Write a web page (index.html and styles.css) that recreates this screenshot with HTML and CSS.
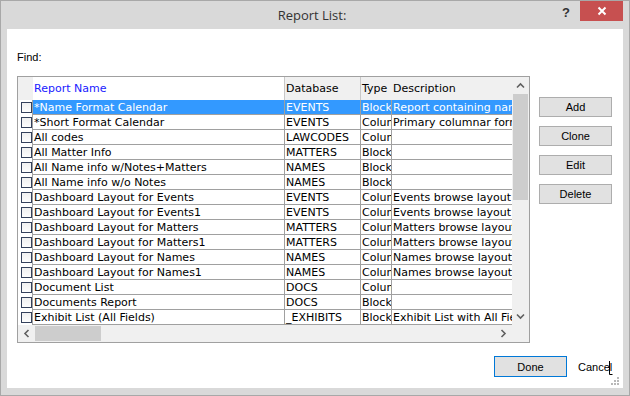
FILE: index.html
```html
<!DOCTYPE html>
<html>
<head>
	<meta charset="utf-8">
	<title>Report List</title>
	<link rel="stylesheet" href="styles.css">
</head>
<body>

<div class="window">
	<div class="titlebar">
		<div></div>
		<div class="title">Report List:</div>
		<div class="controls">
			<span class="help">?</span>
			<span class="close">
				<svg width="10" height="10" viewBox="0 0 10 10"><path d="M1.5 1.5 L8.5 8.5 M8.5 1.5 L1.5 8.5" stroke="#fff" stroke-width="2" fill="none"/></svg>
			</span>
		</div>
	</div>

	<div class="client">
		<div class="find">Find:</div>

		<div class="main">
			<div class="list">
				<div class="view">
					<div class="row head">
						<div class="cell chk"></div>
						<div class="cell sorted">Report Name</div>
						<div class="cell">Database</div>
						<div class="cell type">Type</div>
						<div class="cell">Description</div>
					</div>
					<div class="row sel">
						<div class="cell chk"><span class="box"></span></div>
						<div class="cell">*Name Format Calendar</div>
						<div class="cell">EVENTS</div>
						<div class="cell">Block</div>
						<div class="cell">Report containing names</div>
					</div>
					<div class="row">
						<div class="cell chk"><span class="box"></span></div>
						<div class="cell">*Short Format Calendar</div>
						<div class="cell">EVENTS</div>
						<div class="cell">Column</div>
						<div class="cell">Primary columnar format</div>
					</div>
					<div class="row">
						<div class="cell chk"><span class="box"></span></div>
						<div class="cell">All codes</div>
						<div class="cell">LAWCODES</div>
						<div class="cell">Column</div>
						<div class="cell"></div>
					</div>
					<div class="row">
						<div class="cell chk"><span class="box"></span></div>
						<div class="cell">All Matter Info</div>
						<div class="cell">MATTERS</div>
						<div class="cell">Block</div>
						<div class="cell"></div>
					</div>
					<div class="row">
						<div class="cell chk"><span class="box"></span></div>
						<div class="cell">All Name info w/Notes+Matters</div>
						<div class="cell">NAMES</div>
						<div class="cell">Block</div>
						<div class="cell"></div>
					</div>
					<div class="row">
						<div class="cell chk"><span class="box"></span></div>
						<div class="cell">All Name info w/o Notes</div>
						<div class="cell">NAMES</div>
						<div class="cell">Block</div>
						<div class="cell"></div>
					</div>
					<div class="row">
						<div class="cell chk"><span class="box"></span></div>
						<div class="cell">Dashboard Layout for Events</div>
						<div class="cell">EVENTS</div>
						<div class="cell">Column</div>
						<div class="cell">Events browse layout</div>
					</div>
					<div class="row">
						<div class="cell chk"><span class="box"></span></div>
						<div class="cell">Dashboard Layout for Events1</div>
						<div class="cell">EVENTS</div>
						<div class="cell">Column</div>
						<div class="cell">Events browse layout</div>
					</div>
					<div class="row">
						<div class="cell chk"><span class="box"></span></div>
						<div class="cell">Dashboard Layout for Matters</div>
						<div class="cell">MATTERS</div>
						<div class="cell">Column</div>
						<div class="cell">Matters browse layout</div>
					</div>
					<div class="row">
						<div class="cell chk"><span class="box"></span></div>
						<div class="cell">Dashboard Layout for Matters1</div>
						<div class="cell">MATTERS</div>
						<div class="cell">Column</div>
						<div class="cell">Matters browse layout</div>
					</div>
					<div class="row">
						<div class="cell chk"><span class="box"></span></div>
						<div class="cell">Dashboard Layout for Names</div>
						<div class="cell">NAMES</div>
						<div class="cell">Column</div>
						<div class="cell">Names browse layout</div>
					</div>
					<div class="row">
						<div class="cell chk"><span class="box"></span></div>
						<div class="cell">Dashboard Layout for Names1</div>
						<div class="cell">NAMES</div>
						<div class="cell">Column</div>
						<div class="cell">Names browse layout</div>
					</div>
					<div class="row">
						<div class="cell chk"><span class="box"></span></div>
						<div class="cell">Document List</div>
						<div class="cell">DOCS</div>
						<div class="cell">Column</div>
						<div class="cell"></div>
					</div>
					<div class="row">
						<div class="cell chk"><span class="box"></span></div>
						<div class="cell">Documents Report</div>
						<div class="cell">DOCS</div>
						<div class="cell">Block</div>
						<div class="cell"></div>
					</div>
					<div class="row">
						<div class="cell chk"><span class="box"></span></div>
						<div class="cell">Exhibit List (All Fields)</div>
						<div class="cell">_EXHIBITS</div>
						<div class="cell">Block</div>
						<div class="cell">Exhibit List with All Fields</div>
					</div>
				</div>

				<div class="vscroll">
					<div class="arrow"><svg width="9" height="9" viewBox="0 0 9 9"><path d="M1 6.5 L4.5 3 L8 6.5" stroke="#606060" stroke-width="1.6" fill="none"/></svg></div>
					<div class="thumb"></div>
					<div class="track"></div>
					<div class="arrow"><svg width="9" height="9" viewBox="0 0 9 9"><path d="M1 2.5 L4.5 6 L8 2.5" stroke="#606060" stroke-width="1.6" fill="none"/></svg></div>
				</div>
				<div class="hscroll">
					<div class="arrow"><svg width="9" height="9" viewBox="0 0 9 9"><path d="M6.5 1 L3 4.5 L6.5 8" stroke="#606060" stroke-width="1.6" fill="none"/></svg></div>
					<div class="thumb"></div>
					<div class="track"></div>
					<div class="arrow"><svg width="9" height="9" viewBox="0 0 9 9"><path d="M2.5 1 L6 4.5 L2.5 8" stroke="#606060" stroke-width="1.6" fill="none"/></svg></div>
				</div>
				<div class="corner"></div>
			</div>

			<div class="side">
				<button type="button">Add</button>
				<button type="button">Clone</button>
				<button type="button">Edit</button>
				<button type="button">Delete</button>
			</div>
		</div>

		<div class="footer">
			<button type="button" class="done">Done</button>
			<button type="button" class="flat">Cancel</button>
		</div>

		<svg class="ibeam" width="5" height="16" viewBox="0 0 5 16"><path d="M1.5 1 V14.5 H4.5" stroke="#000" stroke-width="1" fill="none"/></svg>
		<svg class="grip" width="8" height="8" viewBox="0 0 8 8" fill="#b8b8b8">
			<rect x="6" y="0" width="2" height="2"/>
			<rect x="3" y="3" width="2" height="2"/><rect x="6" y="3" width="2" height="2"/>
			<rect x="0" y="6" width="2" height="2"/><rect x="3" y="6" width="2" height="2"/><rect x="6" y="6" width="2" height="2"/>
		</svg>
	</div>
</div>

</body>
</html>
```

FILE: styles.css
```css
body {
	margin: 0;
	font-family: "Liberation Sans", Arial, sans-serif;
}

.window {
	width: 630px;
	height: 396px;
	box-sizing: border-box;
	border: 1px solid #a8a8a8;
	background: #d9d9d9;
	padding: 0 6px 7px;
	display: flex;
	flex-direction: column;
}

.titlebar {
	height: 28px;
	display: grid;
	grid-template-columns: 1fr auto 1fr;
	align-items: center;
}

.title {
	font-family: "Open Sans", sans-serif;
	font-size: 13px;
	color: #333;
	padding: 0 6px 1px 0;
}

.controls {
	justify-self: end;
	align-self: start;
	display: flex;
	align-items: flex-start;
}

.help {
	font-weight: 700;
	font-size: 13px;
	color: #333;
	margin: 4px 10px 0 0;
}

.close {
	width: 43px;
	height: 20px;
	background: #c75050;
	display: flex;
	align-items: center;
	justify-content: center;
}

.client {
	flex: 1;
	background: #fff;
	padding: 0 10px;
	position: relative;
	display: flex;
	flex-direction: column;
	font-size: 11px;
}

.find {
	padding: 21px 0 11px;
	line-height: 15px;
	color: #000;
}

.main {
	display: flex;
}

/* list view */
.list {
	width: 513px;
	height: 267px;
	box-sizing: border-box;
	border: 1px solid #a0a0a0;
	display: grid;
	grid-template-columns: 494px 17px;
	grid-template-rows: 248px 17px;
	font-family: "DejaVu Sans", Verdana, sans-serif;
	font-size: 11px;
}

.view {
	overflow: hidden;
}

.row {
	display: grid;
	grid-template-columns: 15px 252px 76px 31px 120px;
	height: 15px;
}

.cell {
	box-sizing: border-box;
	border-right: 1px solid #a0a0a0;
	border-bottom: 1px solid #a0a0a0;
	padding: 1px 0 0 1px;
	line-height: 14px;
	white-space: nowrap;
	overflow: hidden;
	color: #000;
}

.cell:last-child {
	border-right: 0;
}

.cell.chk {
	border-bottom: 0;
	padding: 2px 0 0 3px;
}

.box {
	display: block;
	width: 9px;
	height: 9px;
	border: 1px solid #34415c;
	background: linear-gradient(#f0f0f0, #fdfdfd);
}

.row.head {
	height: 23px;
}

.head .cell {
	background: #f0f0f0;
	border-bottom: 0;
	border-right-color: #c8c8c8;
	padding-top: 0;
	line-height: 23px;
}

.head .cell.chk,
.head .cell.type {
	border-right-color: #f0f0f0;
}

.head .cell.sorted {
	background: #fff;
	color: #1a1aff;
}

.row.sel .cell:not(.chk) {
	background: #3399ff;
	color: #fff;
}

/* scrollbars */
.vscroll, .hscroll, .corner {
	background: #f0f0f0;
	display: flex;
}

.vscroll {
	flex-direction: column;
}

.arrow {
	width: 17px;
	height: 17px;
	flex: none;
	display: flex;
	align-items: center;
	justify-content: center;
}

.track {
	flex: 1;
}

.thumb {
	background: #cdcdcd;
	flex: none;
}

.vscroll .thumb {
	height: 106px;
	margin: 0 1px;
}

.hscroll .thumb {
	width: 66px;
	margin: 1px 0;
}

/* buttons */
.side {
	margin-left: 9px;
	padding-top: 21px;
	display: flex;
	flex-direction: column;
	gap: 9px;
}

button {
	width: 73px;
	height: 20px;
	box-sizing: border-box;
	border: 1px solid #adadad;
	background: #e1e1e1;
	font-family: "Liberation Sans", Arial, sans-serif;
	font-size: 11px;
	color: #000;
	padding: 0;
}

.footer {
	display: flex;
	justify-content: flex-end;
	align-items: center;
	margin-top: 13px;
}

button.done {
	height: 21px;
	border-color: #0078d7;
}

button.flat {
	width: 35px;
	margin-left: 11px;
	border: 0;
	background: none;
	text-align: left;
}

.ibeam {
	position: absolute;
	left: 601px;
	top: 331px;
}

.grip {
	position: absolute;
	right: 4px;
	bottom: 3px;
}
```
